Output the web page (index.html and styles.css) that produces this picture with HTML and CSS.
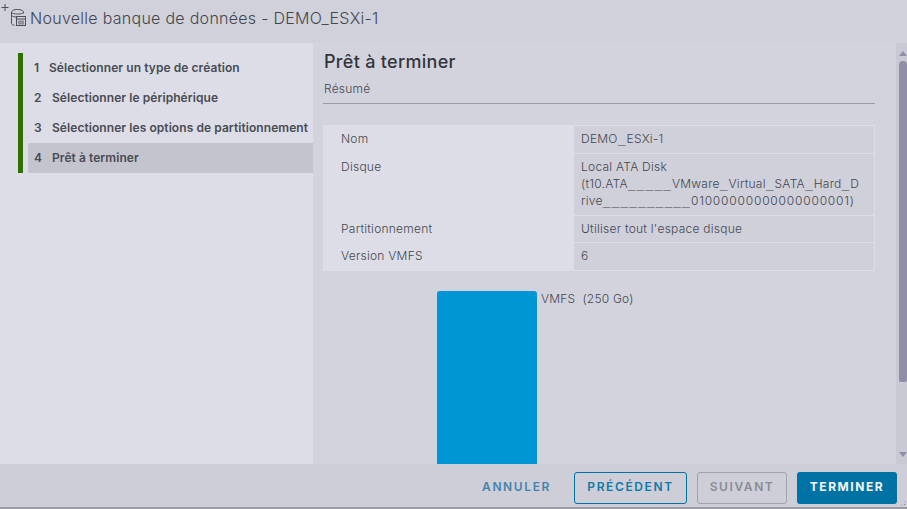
FILE: index.html
```html
<!DOCTYPE html>
<html lang="fr">
<head>
  <meta charset="UTF-8" />
  <title>Nouvelle banque de données - DEMO_ESXi-1</title>
  <link rel="stylesheet" href="styles.css">
</head>

<body>
  <div class="wizard">
    <header class="wizard-header">
      <svg class="wizard-icon" width="26" height="26" viewBox="0 0 26 26" fill="none" stroke="#4c4f58" stroke-width="1">
        <path d="M4 1v7M0.500 4.500h7" />
        <path d="M10.500 14.500v-5.500c0-1 2-2.500 6-2.500s6 1.500 6 2.500v1.500" />
        <path d="M10.500 9.500c1 1 3 1.500 6 1.500s5-.5 6-1.500" />
        <path d="M10.500 12.500c1 1 3 1.500 5 1.500M10.500 14.500v6c0 .8 1 1.500 3 1.800" />
        <rect x="15.500" y="13.500" width="9" height="9" fill="#d0d1db" />
        <path d="M15.500 16h9M18 17.500v4M20 17.500v4M22 17.500v4" />
      </svg>
      <h1>Nouvelle banque de données - DEMO_ESXi-1</h1>
    </header>

    <div class="wizard-body">
      <nav class="steps">
        <ol class="step-list">
          <li class="step"><span class="step-num first">1</span>Sélectionner un type de création</li>
          <li class="step"><span class="step-num">2</span>Sélectionner le périphérique</li>
          <li class="step"><span class="step-num">3</span>Sélectionner les options de partitionnement</li>
          <li class="step active"><span class="step-num">4</span>Prêt à terminer</li>
        </ol>
      </nav>

      <main class="content">
        <div class="content-inner">
          <h2>Prêt à terminer</h2>
          <p class="subtitle">Résumé</p>

          <div class="summary">
            <div class="summary-row">
              <div class="summary-key">Nom</div>
              <div class="summary-value">DEMO<span class="us">_</span>ESXi-1</div>
            </div>
            <div class="summary-row">
              <div class="summary-key">Disque</div>
              <div class="summary-value">Local ATA Disk<br>(t10.ATA<span class="us">_____</span>VMware<span class="us">_</span>Virtual<span class="us">_</span>SATA<span class="us">_</span>Hard<span class="us">_</span>D<br>rive<span class="us">__________</span><span class="digits">01000000000000000001)</span></div>
            </div>
            <div class="summary-row tight">
              <div class="summary-key">Partitionnement</div>
              <div class="summary-value">Utiliser tout l'espace disque</div>
            </div>
            <div class="summary-row">
              <div class="summary-key">Version VMFS</div>
              <div class="summary-value">6</div>
            </div>
          </div>

          <div class="disk">
            <div class="disk-bar"></div>
            <div class="disk-label">VMFS&nbsp;&nbsp;(250 Go)</div>
          </div>
        </div>

        <div class="scrollbar">
          <span class="arrow-up"></span>
          <div class="scroll-track"><div class="scroll-thumb"></div></div>
          <span class="arrow-down"></span>
        </div>
      </main>
    </div>

    <footer class="wizard-footer">
      <button class="btn btn-link">Annuler</button>
      <button class="btn btn-outline">Précédent</button>
      <button class="btn btn-disabled">Suivant</button>
      <button class="btn btn-primary">Terminer</button>
      <span class="grip"></span>
    </footer>
  </div>
</body>
</html>
```

FILE: styles.css
```css
* {
  margin: 0;
  padding: 0;
  box-sizing: border-box;
  font-family: 'Inter', 'Noto Sans', sans-serif;
}

html, body {
  height: 100%;
  overflow: hidden;
}

body {
  background: #d0d1db;
  color: #4a4c55;
}

.wizard {
  width: 907px;
  height: 509px;
  display: flex;
  flex-direction: column;
  border-bottom: 2px solid #9a9ba3;
}

.wizard-header {
  height: 43px;
  flex: none;
  display: flex;
  align-items: flex-start;
  background: #d0d1db;
}

.wizard-icon {
  flex: none;
  margin: 3px 0 0 1px;
}

h1 {
  font-size: 16px;
  font-weight: 300;
  line-height: 20px;
  letter-spacing: .28px;
  color: #45474f;
  margin: 8px 0 0 3px;
}

.wizard-body {
  flex: 1;
  display: flex;
  min-height: 0;
}

.steps {
  width: 313px;
  flex: none;
  padding: 10px 0 0 18px;
  background: #dcdde6;
}

.step-list {
  list-style: none;
  border-left: 5px solid #2f6e00;
}

.step {
  height: 30px;
  margin-left: 5px;
  padding-left: 6px;
  font-size: 12px;
  font-weight: 600;
  line-height: 30px;
  letter-spacing: .07px;
  color: #494b54;
  white-space: nowrap;
}

.step.active {
  background: #c3c4ce;
  border-radius: 2px 0 0 2px;
}

.step-num {
  display: inline-block;
  width: 18px;
}

.step-num.first {
  width: 15px;
}

.content {
  flex: 1;
  display: flex;
  min-width: 0;
  background: #d2d3dd;
}

.content-inner {
  flex: 1;
  min-width: 0;
  padding: 7px 21px 0 10px;
  overflow: hidden;
}

h2 {
  font-size: 18px;
  font-weight: 500;
  line-height: 24px;
  letter-spacing: .3px;
  color: #33353c;
  padding-left: 1px;
}

.subtitle {
  font-size: 12px;
  font-weight: 300;
  line-height: 16px;
  height: 23px;
  margin-top: 7px;
  padding-left: 1px;
  letter-spacing: .2px;
  color: #45474f;
  border-bottom: 1px solid #9b9ca6;
}

.summary {
  margin-top: 21px;
  border-top: 1px solid #dcdde6;
}

.summary-row {
  display: grid;
  grid-template-columns: 251px 1fr;
  border-bottom: 1px solid #dcdde6;
  font-size: 12px;
  font-weight: 300;
  line-height: 17px;
  letter-spacing: .25px;
  color: #45474f;
}

.summary-key {
  padding: 4px 0 6px 18px;
  background: #dcdde6;
}

.summary-value {
  padding: 4px 0 6px 7px;
  background: #cfd0da;
  border-right: 1px solid #dcdde6;
  white-space: nowrap;
}

.tight .summary-key,
.tight .summary-value {
  padding-bottom: 5px;
}

/* underscores are much wider in the real font */
.us {
  font-family: 'DejaVu Sans Mono', monospace;
  font-size: 13px;
  line-height: 1;
  letter-spacing: 1px;
}

.digits {
  letter-spacing: .8px;
}

.disk {
  display: flex;
  align-items: flex-start;
  margin: 20px 0 0 114px;
}

.disk-bar {
  width: 100px;
  height: 300px;
  flex: none;
  background: #0095d3;
  border-radius: 3px 3px 0 0;
}

.disk-label {
  margin-left: 4px;
  font-size: 12px;
  font-weight: 300;
  line-height: 16px;
  letter-spacing: .2px;
  color: #45474f;
}

.scrollbar {
  width: 11px;
  flex: none;
  display: flex;
  flex-direction: column;
  align-items: center;
  padding-left: 3px;
  background: #c8c9d3;
}

.arrow-up {
  margin-top: 8px;
  border: 4px solid transparent;
  border-top: none;
  border-bottom: 5px solid #8e8fa6;
}

.arrow-down {
  margin-bottom: 7px;
  border: 4px solid transparent;
  border-bottom: none;
  border-top: 5px solid #8e8fa6;
}

.scroll-track {
  flex: 1;
  width: 100%;
  padding-top: 5px;
}

.scroll-thumb {
  height: 321px;
  background: #8e8fa6;
  border-radius: 4px 4px 2px 2px;
}

.wizard-footer {
  position: relative;
  height: 43px;
  flex: none;
  display: flex;
  justify-content: flex-end;
  gap: 10px;
  padding: 8px 10px 0 0;
  background: #cdced8;
}

.btn {
  height: 32px;
  padding-bottom: 3px;
  border: 1px solid transparent;
  border-radius: 3px;
  background: none;
  font-size: 12px;
  font-weight: 600;
  letter-spacing: 1.6px;
  text-transform: uppercase;
}

.btn-link {
  width: 93px;
  padding-right: 2px;
  color: #4682b0;
}

.btn-outline {
  width: 113px;
  border-color: #0072a3;
  color: #0f79a8;
}

.btn-disabled {
  width: 90px;
  border-color: #a2a3ae;
  color: #8a8b96;
}

.btn-primary {
  width: 100px;
  background: #0072a3;
  color: #f4f6f8;
  font-weight: 700;
  letter-spacing: 1.55px;
}

/* resize handle, sits over the footer corner */
.grip {
  position: absolute;
  right: 1px;
  bottom: 1px;
  width: 6px;
  height: 6px;
  background: radial-gradient(circle, #7d7e88 1px, transparent 1px) 0 0 / 3px 3px;
  clip-path: polygon(100% 0, 100% 100%, 0 100%);
}
```
